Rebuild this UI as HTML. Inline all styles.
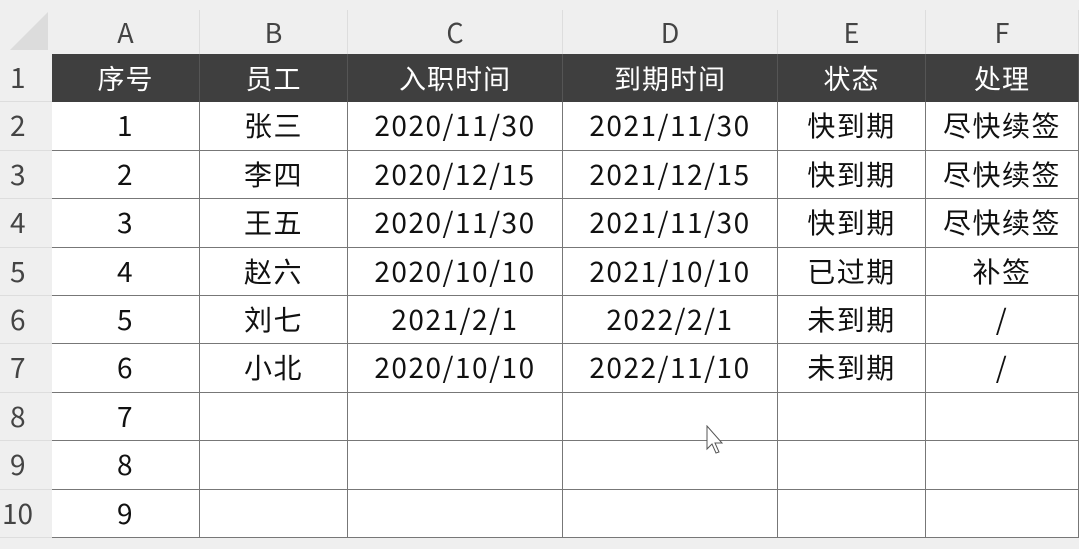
<!DOCTYPE html>
<html><head><meta charset="utf-8"><style>
body{margin:0;width:1079px;height:549px;background:#efefef;overflow:hidden;font-family:"Noto Sans CJK SC",sans-serif;position:relative}
.c{position:absolute;display:flex;align-items:center;justify-content:center;box-sizing:border-box;line-height:1;padding-bottom:2px}
.h{color:#444;font-size:27px}
.d{background:#fff;font-size:28px;letter-spacing:1.5px;color:#111;border-right:1px solid #777;border-bottom:1px solid #777}
.t{background:#3f3f3f;color:#fff;font-size:27px;letter-spacing:1px;border-right:1px solid #555}
.r{color:#444;font-size:28px;border-bottom:1px solid #ddd}
</style></head><body>
<div style="position:absolute;left:10px;top:12px;width:0;height:0;border-left:38px solid transparent;border-bottom:38px solid #dcdcdc"></div>
<div id="g"></div>
<script>
var cols=[52,200,348,563,778,926,1079],L="ABCDEF";
var data=[["序号","员工","入职时间","到期时间","状态","处理"],
["1","张三","2020/11/30","2021/11/30","快到期","尽快续签"],
["2","李四","2020/12/15","2021/12/15","快到期","尽快续签"],
["3","王五","2020/11/30","2021/11/30","快到期","尽快续签"],
["4","赵六","2020/10/10","2021/10/10","已过期","补签"],
["5","刘七","2021/2/1","2022/2/1","未到期","/"],
["6","小北","2020/10/10","2022/11/10","未到期","/"],
["7","","","","",""],["8","","","","",""],["9","","","","",""]];
var h="";
for(var i=0;i<6;i++){h+='<div class="c h" style="left:'+cols[i]+'px;top:10px;width:'+(cols[i+1]-cols[i])+'px;height:44px;border-right:1px solid #ddd">'+L[i]+'</div>';}
for(var r=0;r<10;r++){var y=Math.round(54+r*48.4),y2=Math.round(54+(r+1)*48.4);
h+='<div class="c r" style="left:0;top:'+y+'px;width:52px;height:'+(y2-y)+'px;justify-content:flex-start;padding-left:'+(r==9?2:10)+'px">'+(r+1)+'</div>';
for(var i=0;i<6;i++){h+='<div class="c '+(r==0?'t':'d')+'" style="left:'+cols[i]+'px;top:'+y+'px;width:'+(cols[i+1]-cols[i])+'px;height:'+(y2-y)+'px">'+data[r][i]+'</div>';}}
document.getElementById('g').innerHTML=h;
</script>
<svg style="position:absolute;left:706px;top:425px" width="22" height="32" viewBox="0 0 22 32"><path d="M1 1 L1 24 L6 19 L10 28 L13 27 L9 18 L16 18 Z" fill="#fff" stroke="#555" stroke-width="1"/></svg>
</body></html>
